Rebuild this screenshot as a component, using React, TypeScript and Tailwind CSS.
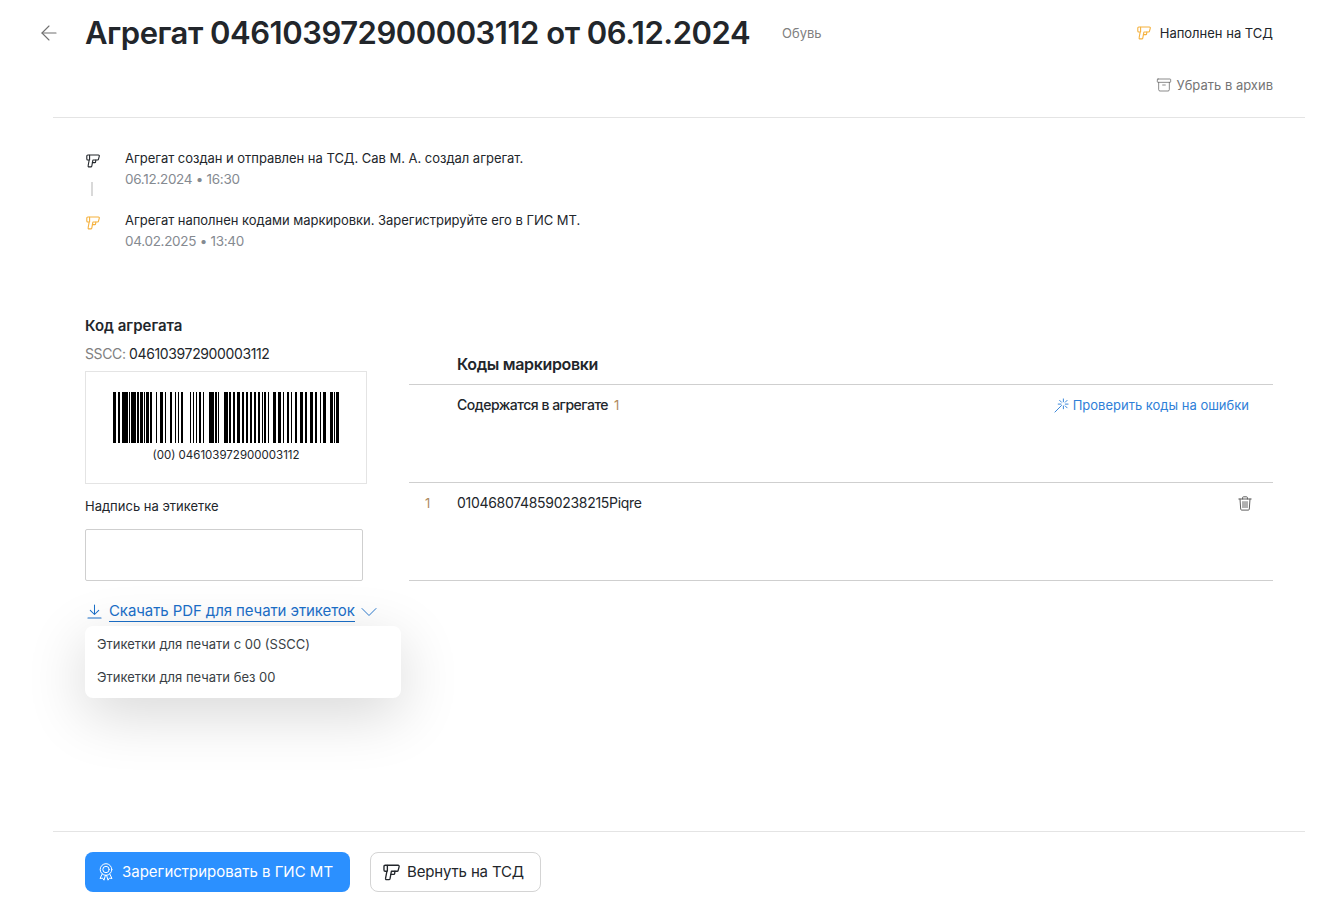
import { Archive, ArrowLeft, ChevronDown } from "lucide-react";

const BARS: [number, number][] = [
  [113, 3], [118, 2], [122, 6], [129, 1], [131, 5], [137, 2], [140, 3], [144, 1], [146, 2], [148, 1], [150, 1.5],
  [156, 1], [160, 3], [165, 1], [170, 2], [175, 1], [178, 1], [181, 2],
  [190, 1], [193, 1], [196, 1], [199, 2], [203, 1], [209, 5], [215, 2], [218, 1],
  [224, 4], [229, 2], [233, 2], [237, 3], [242, 2], [246, 2], [250, 2], [254, 1.5], [258, 2], [262, 1], [264, 2],
  [268, 1], [273, 3], [278, 3], [283, 1], [287, 2], [291, 1], [295, 2], [300, 3], [305, 2], [310, 3], [315, 2],
  [320, 1], [323, 3], [330, 3], [334, 1], [336, 3],
];

function ScannerIcon(props: { className?: string }) {
  return (
    <svg
      viewBox="0 0 14 14"
      fill="none"
      stroke="currentColor"
      strokeWidth="1.1"
      strokeLinejoin="round"
      strokeLinecap="round"
      className={props.className}
    >
      <path d="M1.8 1h10.6a.9.9 0 0 1 .9 1.1l-.8 3.1a1 1 0 0 1-1 .8H6.9L5.8 12.1a1 1 0 0 1-1 .8H2.9a.8.8 0 0 1-.8-1L3.2 6H1.8a1 1 0 0 1-1-1V2a1 1 0 0 1 1-1z" />
      <path d="M6.4 8.6h2.4a.8.8 0 0 0 .8-.7L9.8 6M3.6 1.2v4.6" />
    </svg>
  );
}

function WandIcon(props: { className?: string }) {
  return (
    <svg
      viewBox="0 0 16 16"
      fill="none"
      stroke="currentColor"
      strokeWidth="1"
      strokeLinecap="round"
      className={props.className}
    >
      <path d="M1 15 8 8M10 1v3M10 8.5v3M4.5 6.5h3M12 6.5h3M6 2.5l2 2M14 2.5l-2 2M12 8.5l2 2" />
    </svg>
  );
}

function DownloadIcon(props: { className?: string }) {
  return (
    <svg
      viewBox="0 0 16 16"
      fill="none"
      stroke="currentColor"
      strokeWidth="1.1"
      strokeLinecap="round"
      strokeLinejoin="round"
      className={props.className}
    >
      <path d="M8 1v10M3.5 6.8 8 11.2l4.5-4.4M1 15h14" />
    </svg>
  );
}

function TrashIcon(props: { className?: string }) {
  return (
    <svg
      viewBox="0 0 14 15"
      fill="none"
      stroke="currentColor"
      strokeWidth="1"
      strokeLinecap="round"
      strokeLinejoin="round"
      className={props.className}
    >
      <path d="M.8 3h12.4M4.6 3V1.6a.8.8 0 0 1 .8-.8h3.2a.8.8 0 0 1 .8.8V3M2 3l.7 10.2a1 1 0 0 0 1 .9h6.6a1 1 0 0 0 1-.9L12 3M5 5.6v6M7 5.6v6M9 5.6v6" />
    </svg>
  );
}

function RibbonIcon(props: { className?: string }) {
  return (
    <svg
      viewBox="0 0 14 18"
      fill="none"
      stroke="currentColor"
      strokeWidth="1"
      strokeLinecap="round"
      strokeLinejoin="round"
      className={props.className}
    >
      <circle cx="7" cy="6.5" r="5.8" />
      <circle cx="7" cy="6.5" r="3.2" />
      <path d="M3.2 11 1 15.5l2.6-.4L5 17.2l1.4-4.9M10.8 11l2.2 4.5-2.6-.4L9 17.2l-1.4-4.9" />
    </svg>
  );
}

function TimelineRow(props: { text: string; date: string; iconClass: string }) {
  return (
    <div className="flex">
      <div className="w-[40px] pt-[6px] pl-[1px]">
        <ScannerIcon className={`w-[14px] h-[14px] ${props.iconClass}`} />
      </div>
      <div>
        <div className="text-[13px] leading-[21px] tracking-[-0.03px] text-[#22262b]">{props.text}</div>
        <div className="text-[13.5px] leading-[21px] tracking-[-0.3px] text-[#858a91]">{props.date}</div>
      </div>
    </div>
  );
}

export default function App() {
  return (
    <div
      className="w-[1325px] h-[900px] overflow-hidden bg-white text-[#22262b] flex flex-col pl-[53px] pr-[20px]"
      style={{ fontFamily: "Inter, 'Noto Sans', sans-serif" }}
    >
      <header className="h-[118px] shrink-0 border-b border-[#e4e4e4] relative flex pl-[32px] pr-[32px] pt-[11px]">
        <button className="absolute -left-[16px] top-[21px] text-[#707070]">
          <ArrowLeft className="w-[24px] h-[24px]" strokeWidth={1.1} />
        </button>
        <h1 className="text-[31px] leading-[44px] font-semibold tracking-[-0.48px] text-[#22262b]">
          Агрегат 046103972900003112 от 06.12.2024
        </h1>
        <span className="ml-[32px] mt-[13px] text-[13px] leading-[18px] text-[#808080]">Обувь</span>
        <div className="ml-auto flex flex-col items-end">
          <div className="mt-[13px] flex items-center gap-[9px] text-[13px] leading-[18px]">
            <ScannerIcon className="w-[14px] h-[14px] text-[#f5b13d]" />
            Наполнен на ТСД
          </div>
          <div className="mt-[34px] flex items-center gap-[4px] text-[13px] leading-[18px] text-[#757575]">
            <Archive className="w-[16px] h-[16px] text-[#606060]" strokeWidth={1.1} />
            Убрать в архив
          </div>
        </div>
      </header>

      <section className="shrink-0 pl-[32px] pt-[30px]">
        <TimelineRow
          iconClass="text-[#22262b]"
          text="Агрегат создан и отправлен на ТСД. Сав М. А. создал агрегат."
          date="06.12.2024 • 16:30"
        />
        <div className="h-[14px] w-[2px] bg-[#d9d9d9] ml-[6px] -mt-[8px] mb-[14px]" />
        <TimelineRow
          iconClass="text-[#f5b13d]"
          text="Агрегат наполнен кодами маркировки. Зарегистрируйте его в ГИС МТ."
          date="04.02.2025 • 13:40"
        />
      </section>

      <main className="flex-1 flex pl-[32px] pr-[32px] pt-[64px]">
        <div className="w-[324px] shrink-0 relative">
          <h2 className="text-[15px] leading-[20px] font-semibold">Код агрегата</h2>
          <div className="mt-[8px] text-[14px] leading-[20px] tracking-[-0.38px]">
            <span className="text-[#808080]">SSCC: </span>046103972900003112
          </div>
          <div className="mt-[7px] w-[282px] h-[113px] border border-[#e4e4e4] flex flex-col items-center pt-[20px]">
            <svg viewBox="113 0 226 51" width="226" height="51" className="shrink-0" shapeRendering="crispEdges">
              {BARS.map(([x, w]) => (
                <rect key={x} x={x} y="0" width={w} height="51" fill="#000" />
              ))}
            </svg>
            <div className="mt-[4px] text-[11.5px] leading-[16px]">(00) 046103972900003112</div>
          </div>
          <div className="mt-[13px] text-[13px] leading-[18px]">Надпись на этикетке</div>
          <div className="mt-[14px] w-[278px] h-[52px] border border-[#cfcfcf] rounded-[2px]" />
          <div className="mt-[20px] h-[21px] flex items-center text-[#1b6fc9]">
            <DownloadIcon className="ml-[2px] w-[15px] h-[15px]" />
            <span className="ml-[7px] text-[15px] leading-[20px] tracking-[-0.09px] border-b border-[#1b6fc9]">
              Скачать PDF для печати этикеток
            </span>
            <ChevronDown className="w-[28px] h-[28px]" strokeWidth={0.8} />
          </div>
          <div className="absolute left-0 top-[310px] w-[316px] h-[72px] bg-white rounded-[8px] shadow-[0_16px_60px_rgba(0,0,0,0.16)] pt-[2px] pl-[12px] text-[13px] text-[#3a3f45]">
            <div className="h-[33px] leading-[33px]">Этикетки для печати с 00 (SSCC)</div>
            <div className="h-[33px] leading-[33px]">Этикетки для печати без 00</div>
          </div>
        </div>

        <div className="flex-1 pt-[37px]">
          <h2 className="pl-[48px] text-[16px] leading-[22px] font-semibold tracking-[-0.33px]">Коды маркировки</h2>
          <div className="mt-[9px] h-[99px] border-t border-b border-[#cfcfcf] pl-[48px] pr-[24px] pt-[10px] flex items-start">
            <span className="text-[14px] leading-[20px] font-medium tracking-[-0.5px]">Содержатся в агрегате</span>
            <span className="ml-[6px] text-[13px] leading-[20px] text-[#b08a60]">1</span>
            <span className="ml-auto flex items-center gap-[4px] text-[13px] leading-[20px] text-[#2f80d8]">
              <WandIcon className="w-[15px] h-[15px]" />
              Проверить коды на ошибки
            </span>
          </div>
          <div className="h-[98px] border-b border-[#cfcfcf] flex items-start pt-[10px]">
            <span className="w-[48px] pl-[16px] text-[13px] leading-[20px] text-[#b08a60]">1</span>
            <span className="text-[14px] leading-[20px] tracking-[-0.3px]">0104680748590238215Piqre</span>
            <TrashIcon className="ml-auto mr-[21px] w-[14px] h-[15px] mt-[3px] text-[#606060]" />
          </div>
        </div>
      </main>

      <footer className="h-[69px] shrink-0 border-t border-[#e4e4e4] pl-[32px] pt-[20px] flex items-start gap-[20px]">
        <button className="h-[40px] w-[265px] rounded-[8px] bg-[#2b90ff] text-white flex items-center pl-[14px] gap-[9px] text-[15px]">
          <RibbonIcon className="w-[14px] h-[18px]" />
          Зарегистрировать в ГИС МТ
        </button>
        <button className="h-[40px] w-[171px] rounded-[8px] border border-[#d4d4d4] bg-white flex items-center pl-[12px] gap-[7px] text-[15px] tracking-[-0.15px]">
          <ScannerIcon className="w-[17px] h-[17px]" />
          Вернуть на ТСД
        </button>
      </footer>
    </div>
  );
}
